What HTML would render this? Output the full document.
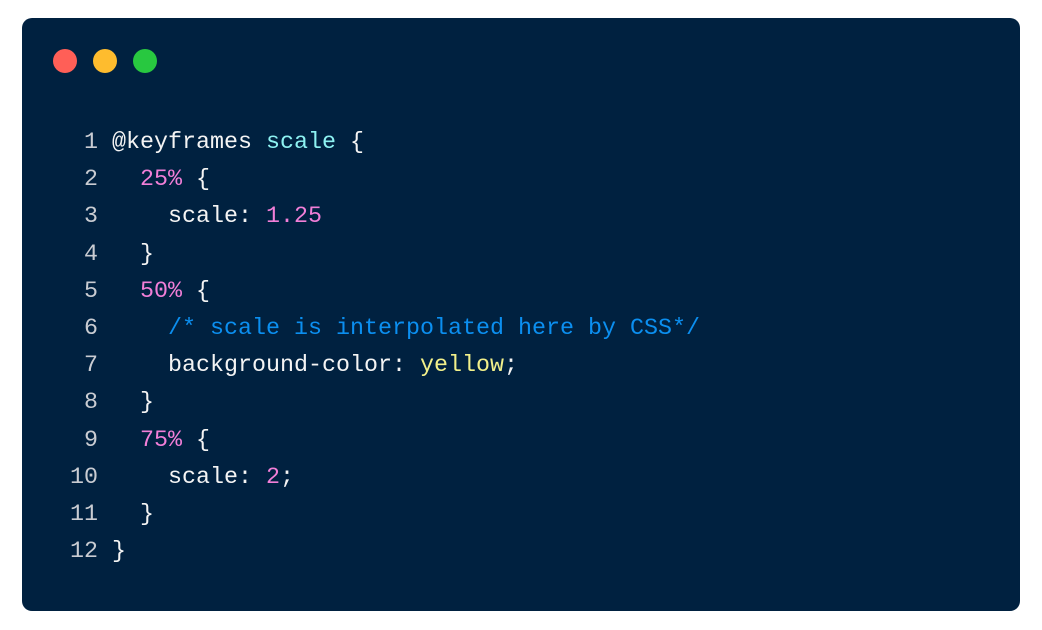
<!DOCTYPE html>
<html><head><meta charset="utf-8"><style>
html,body{margin:0;padding:0;background:#fff;width:1042px;height:630px;overflow:hidden}
.card{position:absolute;left:22px;top:18px;width:998px;height:593px;background:#002140;border-radius:10px}
.dot{position:absolute;top:31px;width:24px;height:24px;border-radius:50%}
pre{position:absolute;left:48px;top:107px;margin:0;font-family:"Liberation Mono",monospace;font-size:23.33px;line-height:37.2px;color:#f4f4f4}
.n{color:#c9ccd2;display:inline-block;width:28px;text-align:right;margin-right:14px}
.p{color:#f27fd8}.c{color:#0b8ff0}.y{color:#f2f08a}.t{color:#8df2f2}
</style></head><body>
<div class="card">
<div class="dot" style="left:31px;background:#ff5f57"></div>
<div class="dot" style="left:71px;background:#febc2e"></div>
<div class="dot" style="left:111px;background:#28c840"></div>
<pre><span class="n">1</span>@keyframes <span class="t">scale</span> {
<span class="n">2</span>  <span class="p">25%</span> {
<span class="n">3</span>    scale: <span class="p">1.25</span>
<span class="n">4</span>  }
<span class="n">5</span>  <span class="p">50%</span> {
<span class="n">6</span>    <span class="c">/* scale is interpolated here by CSS*/</span>
<span class="n">7</span>    background-color: <span class="y">yellow</span>;
<span class="n">8</span>  }
<span class="n">9</span>  <span class="p">75%</span> {
<span class="n">10</span>    scale: <span class="p">2</span>;
<span class="n">11</span>  }
<span class="n">12</span>}</pre>
</div>
</body></html>
